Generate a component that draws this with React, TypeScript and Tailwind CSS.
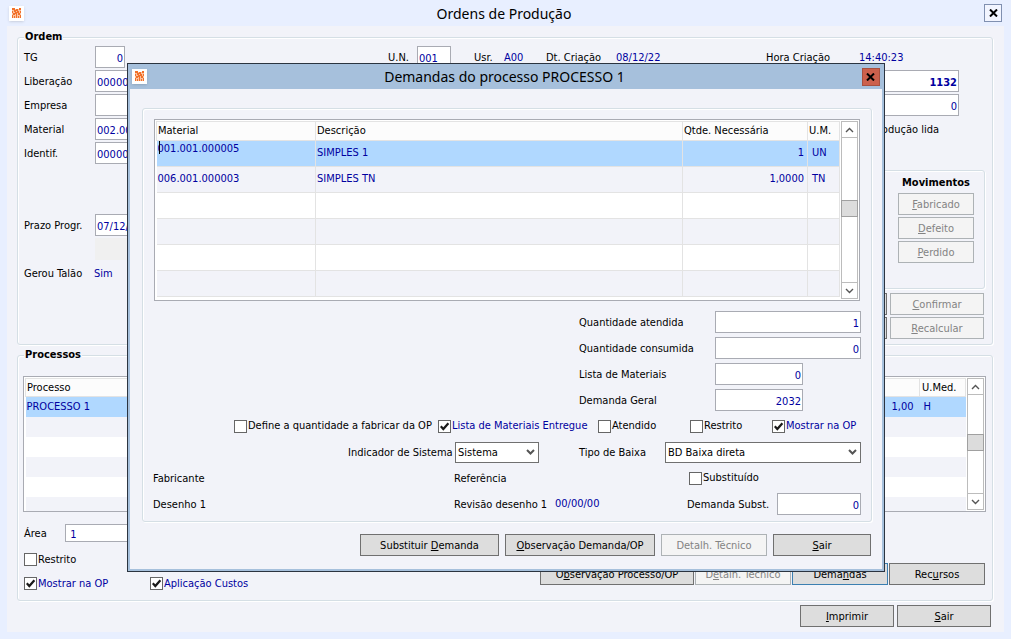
import type { ReactNode } from 'react'
import clsx from 'clsx'

const demandas = [
  { material: '001.001.000005', descricao: 'SIMPLES 1', qtde: '1', um: 'UN' },
  { material: '006.001.000003', descricao: 'SIMPLES TN', qtde: '1,0000', um: 'TN' },
]

const Logo = () => (
  <span className="flex h-[15px] w-[15px] items-center justify-center bg-white shadow-sm">
    <svg width="9" height="11" viewBox="0 0 9 11" aria-hidden="true">
      <path fill="#fbc3a0" d="M0 1h9v9H0z" />
      <path
        fill="#f2702a"
        d="M0 0h3v2H0zM4 1h2v2H4zM7 0h2v2H7zM2 2h2v2H2zM0 3h1v2H0zM5 3h2v2H5zM8 3h1v2H8zM3 4h2v2H3zM1 5h2v2H1zM6 5h2v2H6zM0 7h1v3H0zM2 8h1v2H2zM4 6h1v4H4zM6 8h1v2H6zM8 7h1v3H8z"
      />
    </svg>
  </span>
)

const CloseIcon = () => (
  <svg width="9" height="8" viewBox="0 0 9 8" stroke="#000" strokeWidth="2" aria-hidden="true">
    <path d="M1 0.5L8 7.5M8 0.5L1 7.5" />
  </svg>
)

const Chevron = ({ up = false, bold = false }: { up?: boolean; bold?: boolean }) => (
  <svg
    width="9"
    height="6"
    viewBox="0 0 9 6"
    fill="none"
    stroke="#555"
    strokeWidth={bold ? 2 : 1.4}
    aria-hidden="true"
  >
    <path d={up ? 'M1 5L4.5 1.5L8 5' : 'M1 1L4.5 4.5L8 1'} />
  </svg>
)

type ButtonProps = {
  children: ReactNode
  className?: string
  disabled?: boolean
  active?: boolean
}

const Button = ({ children, className, disabled, active }: ButtonProps) => (
  <button
    type="button"
    disabled={disabled}
    className={clsx(
      'h-[22px] shrink-0 border pt-0.5 text-center leading-[18px] whitespace-nowrap',
      disabled ? 'border-[#adb2b5] bg-[#f4f4f4] text-[#838383]' : 'bg-[#dddddd] text-black',
      !disabled && (active ? 'border-[#3c7fb1]' : 'border-[#707070]'),
      className,
    )}
  >
    {children}
  </button>
)

type FieldProps = {
  label: string
  value?: string
  labelClass?: string
  inputClass?: string
  hideLabel?: boolean
  short?: boolean
}

const Field = ({ label, value = '', labelClass, inputClass, hideLabel, short }: FieldProps) => {
  const input = (
    <input
      type="text"
      aria-label={hideLabel ? label : undefined}
      defaultValue={value}
      className={clsx(
        'shrink-0 border border-[#a9abb3] bg-white pt-0.5 pr-px pl-px text-[#0000a0] outline-none',
        short ? 'h-[18px]' : 'h-[22px]',
        inputClass,
      )}
    />
  )
  if (hideLabel) return <div className="flex h-full items-center">{input}</div>
  return (
    <label className="flex h-full items-center">
      <span className={clsx('shrink-0 pt-0.5 whitespace-nowrap', labelClass)}>{label}</span>
      {input}
    </label>
  )
}

type CheckProps = { label: string; checked?: boolean; className?: string }

const Check = ({ label, checked = false, className }: CheckProps) => (
  <label className={clsx('flex items-center gap-px whitespace-nowrap', checked && 'text-[#0000a0]', className)}>
    <span className="relative flex h-[13px] w-[13px] shrink-0">
      <input
        type="checkbox"
        defaultChecked={checked}
        className="peer h-[13px] w-[13px] appearance-none border border-[#666] bg-white"
      />
      <svg
        className="pointer-events-none absolute inset-0 hidden peer-checked:block"
        width="13"
        height="13"
        viewBox="0 0 13 13"
        fill="none"
        stroke="#1a1a1a"
        strokeWidth="2.2"
        aria-hidden="true"
      >
        <path d="M2.8 6.3L5.3 9L10.4 3.2" />
      </svg>
    </span>
    {label}
  </label>
)

type SelectProps = { label: string; value: string; labelClass: string; className: string }

const Select = ({ label, value, labelClass, className }: SelectProps) => (
  <label className="flex items-center">
    <span className={clsx('shrink-0 pt-0.5', labelClass)}>{label}</span>
    <span className={clsx('relative flex items-center', className)}>
      <select
        defaultValue={value}
        className="h-[21px] w-full appearance-none border border-[#707070] bg-white px-0.5 pt-px text-black outline-none"
      >
        <option>{value}</option>
      </select>
      <span className="pointer-events-none absolute right-1">
        <Chevron bold />
      </span>
    </span>
  </label>
)

const Scrollbar = ({ thumbClass }: { thumbClass: string }) => (
  <div className="m-px flex w-[17px] shrink-0 flex-col border border-[#bcbcbc] bg-white">
    <div className="flex h-4 items-center justify-center border-b border-[#bcbcbc]">
      <Chevron up />
    </div>
    <div className="flex flex-1 flex-col">
      <div className={clsx('-mx-px h-[17px] border border-[#a0a0a0] bg-[#dcdcdc]', thumbClass)} />
    </div>
    <div className="flex h-4 items-center justify-center border-t border-[#bcbcbc]">
      <Chevron />
    </div>
  </div>
)

const groupClass = 'rounded-[3px] border border-[#d5dfe5] shadow-[1px_1px_0_#fff,inset_1px_1px_0_#fff]'

const Group = ({ title, className, children }: { title: string; className?: string; children: ReactNode }) => (
  <fieldset className={clsx(groupClass, 'min-w-0 pr-[7px] pl-[6px]', className)}>
    <legend className="h-[14px] bg-[#f2f3f9] px-px font-bold">{title}</legend>
    {children}
  </fieldset>
)

const OrdemGroup = () => (
  <Group title="Ordem" className="pt-px pb-[5px]">
    <div className="flex h-6 items-center">
      <Field label="TG" value="0" labelClass="w-[71px]" inputClass="w-[30px] text-right" />
      <div className="ml-auto flex h-full items-center">
        <Field label="U.N." value="001" labelClass="w-[29px]" inputClass="w-[34px]" />
        <div className="flex pt-0.5 pl-[23px]">
          <span className="w-[30px]">Usr.</span>
          <span className="w-[42px] text-[#0000a0]">A00</span>
          <span className="w-[70px]">Dt. Criação</span>
          <span className="w-[150px] text-[#0000a0]">08/12/22</span>
          <span className="w-[93px]">Hora Criação</span>
          <span className="w-[126px] text-[#0000a0]">14:40:23</span>
        </div>
      </div>
    </div>
    <div className="flex justify-between">
      <div className="grid auto-rows-[24px] content-start">
        <Field label="Liberação" value="00000" labelClass="w-[71px]" inputClass="w-[90px]" />
        <Field label="Empresa" labelClass="w-[71px]" inputClass="w-[90px]" />
        <Field label="Material" value="002.00" labelClass="w-[71px]" inputClass="w-[90px]" />
        <Field label="Identif." value="00000" labelClass="w-[71px]" inputClass="w-[90px]" />
        <div className="row-span-2" />
        <Field label="Prazo Progr." value="07/12/" labelClass="w-[71px]" inputClass="w-[90px]" />
        <div className="my-px ml-[71px] bg-[#f0f0f0]" />
        <div className="flex items-center pt-0.5">
          <span className="w-[70px]">Gerou Talão</span>
          <span className="text-[#0000a0]">Sim</span>
        </div>
      </div>
      <div className="flex flex-col items-end">
        <div className="mr-[26px] grid auto-rows-[24px]">
          <Field label="Ordem" value="1132" hideLabel inputClass="w-[120px] text-right font-bold" />
          <Field label="Quantidade" value="0" hideLabel inputClass="w-[120px] text-right" />
          <span className="self-center pt-0.5 pr-5 text-right">Produção lida</span>
        </div>
        <div className={clsx(groupClass, 'mt-[29px] flex h-[119px] w-[110px] flex-col items-end gap-0.5 pt-[5px] pr-[10px]')}>
          <h2 className="mr-1 mb-px font-bold">Movimentos</h2>
          <Button disabled className="w-[76px]">
            <u>F</u>abricado
          </Button>
          <Button disabled className="w-[76px]">
            <u>D</u>efeito
          </Button>
          <Button disabled className="w-[76px]">
            <u>P</u>erdido
          </Button>
        </div>
        <div className="mt-1 grid grid-cols-[94px_94px] gap-x-[3px] gap-y-0.5 pr-px">
          <Button>Alterar</Button>
          <Button disabled>
            <u>C</u>onfirmar
          </Button>
          <Button>Excluir</Button>
          <Button disabled>
            <u>R</u>ecalcular
          </Button>
        </div>
      </div>
    </div>
  </Group>
)

const ProcessosGroup = () => (
  <Group title="Processos" className="mt-[3px] pt-[14px]">
    <div className="-mx-px flex h-[136px] overflow-hidden border border-[#a9abb3] bg-white">
      <div className="flex-1 overflow-hidden pt-px pl-px">
        <table className="w-full table-fixed border-collapse">
          <thead>
            <tr className="h-[18px] bg-[#fcfcfc] text-left">
              <th className="border border-[#e3e3e3] px-px font-normal">Processo</th>
              <th className="w-[120px] border border-[#e3e3e3]" />
              <th className="w-[46px] border border-[#e3e3e3] px-0.5 font-normal">U.Med.</th>
            </tr>
          </thead>
          <tbody className="text-[#0000a0]">
            <tr className="h-5 bg-[#b0d8ff]">
              <td className="px-px">PROCESSO 1</td>
              <td className="px-[6px] text-right">1,00</td>
              <td className="px-1">H</td>
            </tr>
            {[0, 1, 2, 3, 4].map((n) => (
              <tr key={n} className="h-5 even:bg-[#f2f3f9]">
                <td colSpan={3} />
              </tr>
            ))}
          </tbody>
        </table>
      </div>
      <Scrollbar thumbClass="mt-[39px]" />
    </div>
    <div className="flex items-end justify-between">
      <div className="grid auto-rows-[24px] pt-[9px] pb-[7px]">
        <Field label="Área" value=" 1" short labelClass="w-[41px]" inputClass="w-[140px]" />
        <div className="flex items-center pt-[5px]">
          <Check label="Restrito" />
        </div>
        <div className="flex items-center pt-[5px]">
          <Check label="Mostrar na OP" checked className="w-[126px]" />
          <Check label="Aplicação Custos" checked />
        </div>
      </div>
      <div className="mb-[15px] flex gap-px">
        <Button className="w-[154px]">
          O<u>b</u>servação Processo/OP
        </Button>
        <Button disabled className="w-[96px]">
          D<u>e</u>talh. Técnico
        </Button>
        <Button active className="w-[96px]">
          Dema<u>n</u>das
        </Button>
        <Button className="w-[96px]">
          Rec<u>u</u>rsos
        </Button>
      </div>
    </div>
  </Group>
)

const DemandasTable = () => (
  <div className="mr-px flex h-[182px] overflow-hidden border border-[#a9abb3] bg-white">
    <div className="flex-1 overflow-hidden pt-px pl-px">
      <table className="w-full table-fixed border-collapse">
        <thead>
          <tr className="h-[19px] bg-[#fcfcfc] text-left">
            <th className="w-[159px] border border-[#e3e3e3] px-px font-normal">Material</th>
            <th className="border border-[#e3e3e3] px-px font-normal">Descrição</th>
            <th className="w-[125px] border border-[#e3e3e3] px-px font-normal">Qtde. Necessária</th>
            <th className="w-8 border border-[#e3e3e3] px-px font-normal">U.M.</th>
          </tr>
        </thead>
        <tbody className="text-[#0000a0]">
          {[0, 1, 2, 3, 4, 5].map((n) => {
            const row = demandas[n]
            return (
              <tr key={n} className={clsx('h-[26px]', n === 0 ? 'bg-[#b0d8ff]' : 'even:bg-[#f2f3f9]')}>
                <td className="relative border border-l-0 border-[#e3e3e3] px-px pb-0.5">
                  {n === 0 ? (
                    <>
                      <input
                        type="text"
                        aria-label="Material"
                        defaultValue={row.material}
                        className="mb-2 block h-[14px] w-full bg-transparent outline-none"
                      />
                      <span className="absolute top-0 left-0.5 h-[13px] w-px bg-black" />
                    </>
                  ) : (
                    row?.material
                  )}
                </td>
                <td className="border border-[#e3e3e3] px-px pb-0.5">{row?.descricao}</td>
                <td className="border border-[#e3e3e3] px-[3px] pb-0.5 text-right">{row?.qtde}</td>
                <td className="border border-[#e3e3e3] px-1 pb-0.5">{row?.um}</td>
              </tr>
            )
          })}
        </tbody>
      </table>
    </div>
    <Scrollbar thumbClass="mt-[62px]" />
  </div>
)

const DemandasDialog = () => (
  <div
    role="dialog"
    aria-labelledby="demandas-title"
    className="absolute top-[63px] right-[126px] left-[127px] border border-[#2b3440] bg-[#a6c0dc] px-0.5 pb-0.5"
  >
    <header className="flex h-[25px] items-center justify-between px-0.5">
      <Logo />
      <h1 id="demandas-title" className="font-['Noto_Sans',sans-serif] text-sm">
        Demandas do processo PROCESSO 1
      </h1>
      <button
        type="button"
        aria-label="Fechar"
        className="flex h-[18px] w-[18px] items-center justify-center border border-[#a8503f] bg-[#cc604c]"
      >
        <CloseIcon />
      </button>
    </header>
    <div className="bg-[#f2f3f9] pt-[19px] pr-[10px] pb-[13px] pl-3">
      <div className={clsx(groupClass, 'h-[414px] pt-[10px] pr-[10px] pl-[11px]')}>
        <DemandasTable />
        <div className="mt-2 flex justify-end">
          <div className="grid w-[282px] auto-rows-[26px]">
            <Field label="Quantidade atendida" value="1" labelClass="w-[136px]" inputClass="w-[146px] text-right" />
            <Field label="Quantidade consumida" value="0" labelClass="w-[136px]" inputClass="w-[146px] text-right" />
            <Field label="Lista de Materiais" value="0" labelClass="w-[136px]" inputClass="w-[88px] text-right" />
            <Field label="Demanda Geral" value="2032" labelClass="w-[136px]" inputClass="w-[88px] text-right" />
          </div>
        </div>
        <div className="flex h-[26px] items-center justify-end">
          <Check label="Define a quantidade a fabricar da OP" className="w-[204px]" />
          <Check label="Lista de Materiais Entregue" checked className="w-[160px]" />
          <Check label="Atendido" className="w-[92px]" />
          <Check label="Restrito" className="w-[82px]" />
          <Check label="Mostrar na OP" checked className="w-[89px]" />
        </div>
        <div className="flex h-[26px] items-center justify-end gap-10">
          <Select label="Indicador de Sistema" value="Sistema" labelClass="w-[107px]" className="w-[84px]" />
          <Select label="Tipo de Baixa" value="BD Baixa direta" labelClass="w-[86px]" className="w-[196px]" />
        </div>
        <div className="-ml-px flex h-[26px] items-center">
          <span className="pt-0.5">Fabricante</span>
          <span className="ml-auto w-[235px] pt-0.5">Referência</span>
          <Check label="Substituído" className="w-[172px]" />
        </div>
        <div className="-ml-px flex h-[26px] items-center">
          <span className="pt-0.5">Desenho 1</span>
          <span className="ml-auto w-[101px] pt-0.5">Revisão desenho 1</span>
          <span className="w-[132px] text-[#0000a0]">00/00/00</span>
          <Field label="Demanda Subst." value="0" labelClass="w-[90px]" inputClass="w-[84px] text-right" />
        </div>
      </div>
      <div className="mt-3 flex justify-end gap-[6px] pr-px">
        <Button className="w-[139px]">
          Substituir <u>D</u>emanda
        </Button>
        <Button className="w-[150px]">
          <u>O</u>bservação Demanda/OP
        </Button>
        <Button disabled className="w-[106px]">
          Detalh. Técnico
        </Button>
        <Button className="w-[98px]">
          <u>S</u>air
        </Button>
      </div>
    </div>
  </div>
)

const App = () => {
  return (
    <div className="relative flex min-h-screen flex-col bg-[#e8efff] px-[7px] pb-[7px] font-['DejaVu_Sans_Condensed','DejaVu_Sans','Noto_Sans',sans-serif] text-[11px] leading-[14px] text-black">
      <header className="flex h-[26px] items-center justify-between px-0.5">
        <Logo />
        <h1 className="pt-0.5 font-['Noto_Sans',sans-serif] text-sm">Ordens de Produção</h1>
        <button
          type="button"
          aria-label="Fechar"
          className="flex h-[18px] w-[18px] items-center justify-center border border-[#8090b0] bg-[#f2f5ff]"
        >
          <CloseIcon />
        </button>
      </header>
      <main className="flex-1 bg-[#f2f3f9] pt-1 pr-[11px] pb-[5px] pl-[10px]">
        <OrdemGroup />
        <ProcessosGroup />
        <div className="mt-1 mr-0.5 flex justify-end gap-[3px]">
          <Button className="w-[94px]">
            <u>I</u>mprimir
          </Button>
          <Button className="w-[94px]">
            <u>S</u>air
          </Button>
        </div>
      </main>
      <DemandasDialog />
    </div>
  )
}

export default App
